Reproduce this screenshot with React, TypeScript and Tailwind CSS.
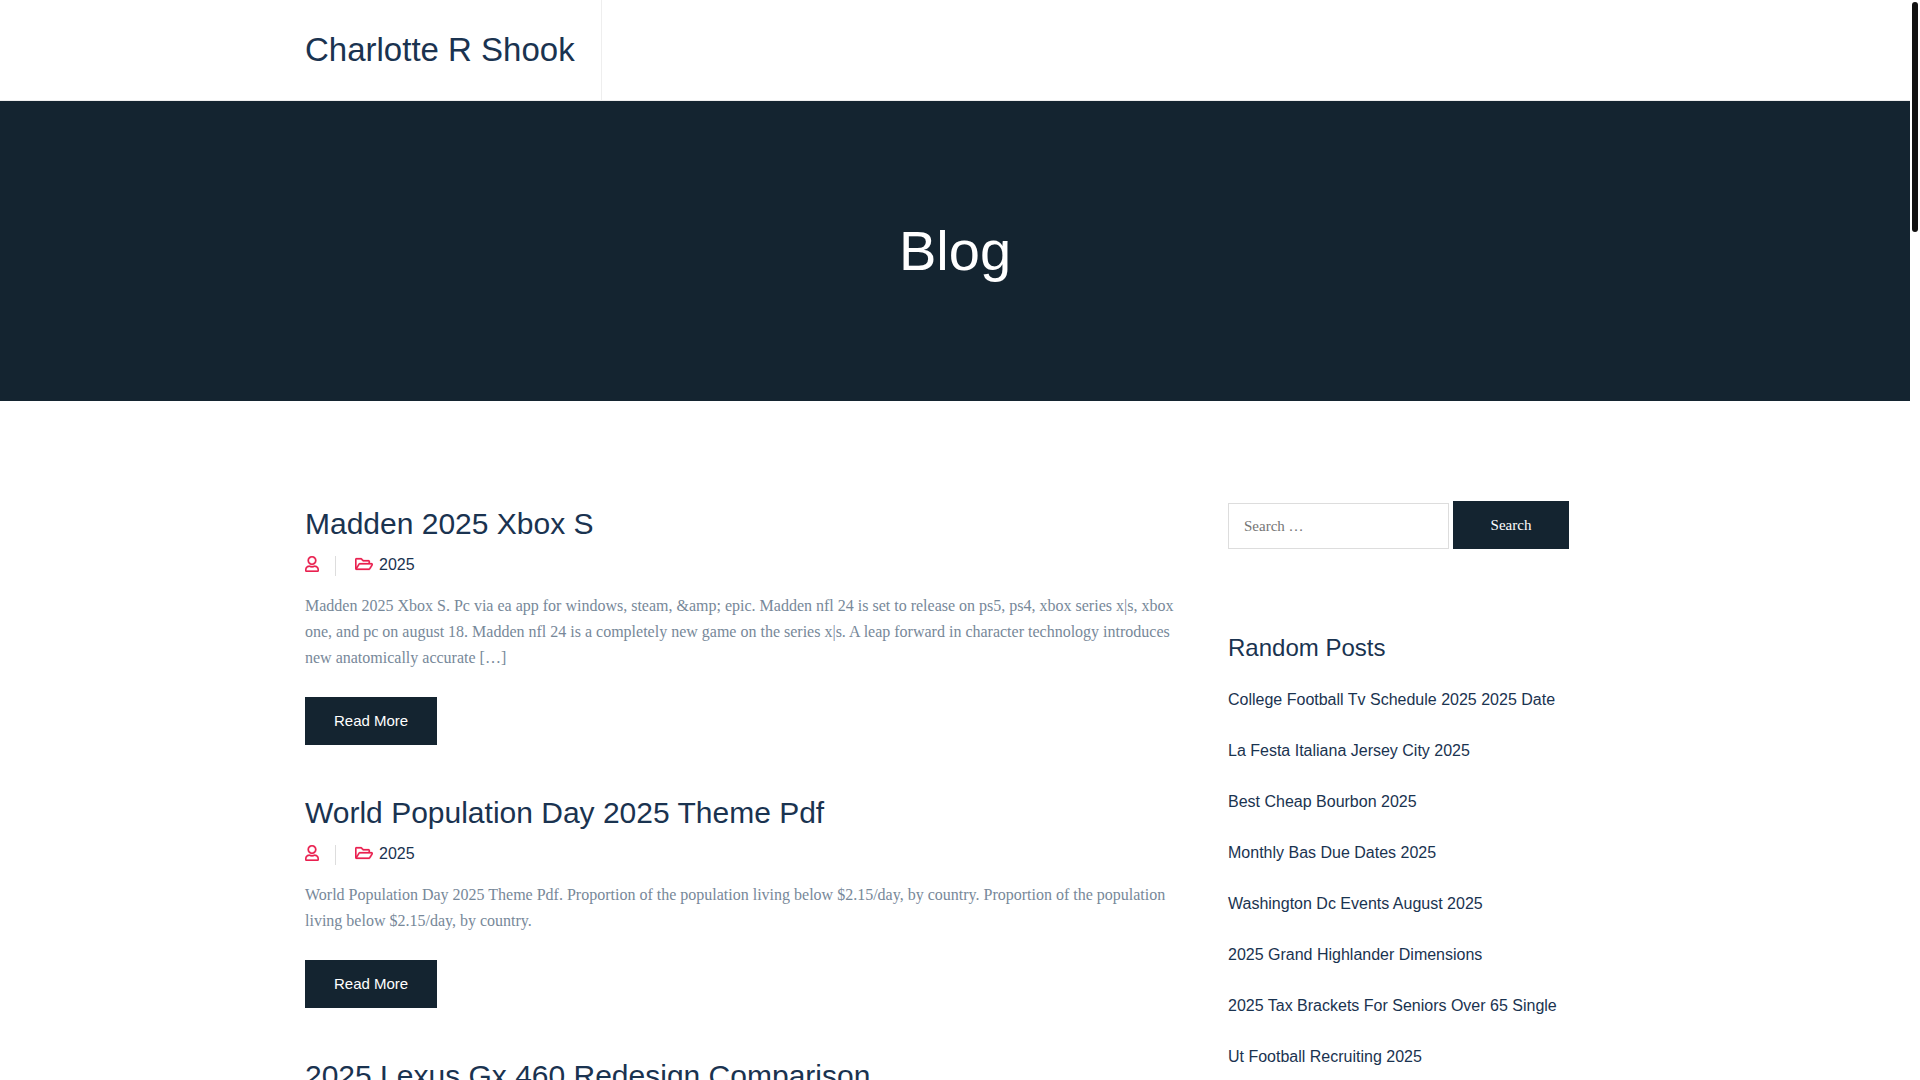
import React from 'react';
import { FaRegFolderOpen, FaRegUser } from 'react-icons/fa';

const posts = [
  {
    id: 1,
    title: "Madden 2025 Xbox S",
    category: "2025",
    excerpt: "Madden 2025 Xbox S. Pc via ea app for windows, steam, &amp; epic. Madden nfl 24 is set to release on ps5, ps4, xbox series x|s, xbox one, and pc on august 18. Madden nfl 24 is a completely new game on the series x|s. A leap forward in character technology introduces new anatomically accurate […]"
  },
  {
    id: 2,
    title: "World Population Day 2025 Theme Pdf",
    category: "2025",
    excerpt: "World Population Day 2025 Theme Pdf. Proportion of the population living below $2.15/day, by country. Proportion of the population living below $2.15/day, by country."
  },
  {
    id: 3,
    title: "2025 Lexus Gx 460 Redesign Comparison",
    category: "2025",
    excerpt: "2025 Lexus Gx 460 Redesign Comparison."
  }
];

const randomPosts = [
  "College Football Tv Schedule 2025 2025 Date",
  "La Festa Italiana Jersey City 2025",
  "Best Cheap Bourbon 2025",
  "Monthly Bas Due Dates 2025",
  "Washington Dc Events August 2025",
  "2025 Grand Highlander Dimensions",
  "2025 Tax Brackets For Seniors Over 65 Single",
  "Ut Football Recruiting 2025"
];

function PostItem({ post }: { post: (typeof posts)[number] }) {
  return (
    <article className="mb-[45px]">
      <h2 className="font-['Liberation_Sans',sans-serif] text-[30px] leading-[45px] text-[#1a3350]">
        <a href="#">{post.title}</a>
      </h2>
      <div className="mt-[10px] flex h-5 items-start font-['Liberation_Sans',sans-serif] text-base leading-[18px] text-[#1a3350]">
        <a href="#" aria-label="Author" className="h-5 border-r border-[#dddddd] pr-4">
          <FaRegUser className="h-4 w-[14px] stroke-[8px] text-[#e9204f]" />
        </a>
        <a href="#" className="ml-[19px] flex items-start gap-[6px]">
          <FaRegFolderOpen className="h-4 w-[18px] stroke-[8px] text-[#e9204f]" />
          {post.category}
        </a>
      </div>
      <p className="mt-[17px] text-base leading-[26px] text-[#778899]">{post.excerpt}</p>
      <a
        href="#"
        className="mt-[26px] inline-flex h-12 items-center bg-[#142430] px-[29px] align-top font-['Liberation_Sans',sans-serif] text-[15px] text-white hover:bg-[#e9204f]"
      >
        Read More
      </a>
    </article>
  );
}

export default function App() {
  return (
    <div className="flex h-screen overflow-hidden bg-white font-['Liberation_Serif',serif]">
      <div className="h-full min-w-0 flex-1 overflow-hidden">
        <header className="border-b border-[#eeeeee]">
          <div className="mx-auto flex max-w-[1300px]">
            <a
              href="#"
              className="flex h-[100px] items-center border-r border-[#eeeeee] pr-[26px] font-['Liberation_Sans',sans-serif] text-[33px] text-[#1a3350]"
            >
              Charlotte R Shook
            </a>
          </div>
        </header>

        <section className="flex h-[300px] items-center justify-center bg-[#142430]">
          <h1 className="font-['Liberation_Sans',sans-serif] text-[56px] text-white">Blog</h1>
        </section>

        <div className="mx-auto grid max-w-[1300px] grid-cols-[1fr_377px] gap-11 pt-[100px]">
          <main>
            {posts.map((post) => (
              <PostItem key={post.id} post={post} />
            ))}
          </main>

          <aside>
            <form className="flex items-end gap-1" onSubmit={(e) => e.preventDefault()}>
              <label htmlFor="search" className="sr-only">Search for:</label>
              <input
                id="search"
                type="search"
                placeholder="Search …"
                className="h-[46px] w-[221px] border border-[#dddddd] px-[15px] text-[15px] placeholder:text-[#757575]"
              />
              <button type="submit" className="h-12 w-[116px] bg-[#142430] text-[15px] text-white">
                Search
              </button>
            </form>

            <h2 className="mt-[81px] font-['Liberation_Sans',sans-serif] text-2xl leading-[36px] text-[#1a3350]">
              Random Posts
            </h2>
            <ul className="mt-[21px] font-['Liberation_Sans',sans-serif] text-base leading-[26px] text-[#1a3350]">
              {randomPosts.map((title) => (
                <li key={title} className="mb-[25px]">
                  <a href="#">{title}</a>
                </li>
              ))}
            </ul>
          </aside>
        </div>
      </div>

      {/* Scroll track */}
      <div className="w-[10px] shrink-0 bg-white px-[2px] pt-[2px]">
        <div className="h-[230px] rounded-full bg-[#111111]"></div>
      </div>
    </div>
  );
}
